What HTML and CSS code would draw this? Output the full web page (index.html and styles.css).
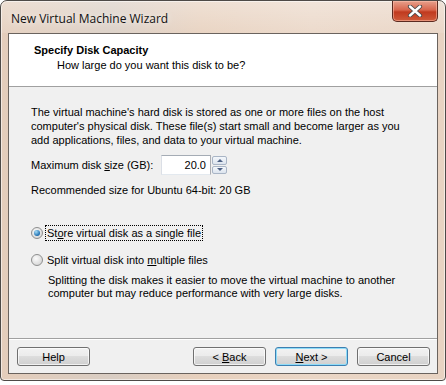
FILE: index.html
```html
<!DOCTYPE html>
<html lang="en">
<head>
    <meta charset="UTF-8">
    <title>New Virtual Machine Wizard</title>
    <link rel="stylesheet" href="styles.css">
</head>
<body>
    <div class="window">
        <div class="titlebar">
            <span class="title">New Virtual Machine Wizard</span>
            <button class="close">
                <svg width="16" height="12" viewBox="0 0 16 12">
                    <path d="M3 1.5 L13 10.5 M13 1.5 L3 10.5" stroke="#4a4a4a" stroke-width="4.2" stroke-linecap="round"/>
                    <path d="M3 1.5 L13 10.5 M13 1.5 L3 10.5" stroke="#fff" stroke-width="2.4" stroke-linecap="round"/>
                </svg>
            </button>
        </div>

        <div class="client">
            <div class="header">
                <div class="header-title">Specify Disk Capacity</div>
                <div class="header-sub">How large do you want this disk to be?</div>
            </div>

            <div class="content">
                <p class="intro">The virtual machine's hard disk is stored as one or more files on the host computer's physical disk. These file(s) start small and become larger as you add applications, files, and data to your virtual machine.</p>

                <div class="size-row">
                    <label class="size-label">Maximum disk <u>s</u>ize (GB):</label>
                    <div class="spinner">
                        <div class="spin-value">20.0</div>
                        <div class="spin-buttons">
                            <div class="spin-btn"><span class="arrow-up"></span></div>
                            <div class="spin-btn"><span class="arrow-down"></span></div>
                        </div>
                    </div>
                </div>

                <div class="recommended">Recommended size for Ubuntu 64-bit: 20 GB</div>

                <div class="options">
                    <div class="radio-row">
                        <span class="radio checked"></span>
                        <span class="radio-label focused">St<u>o</u>re virtual disk as a single file</span>
                    </div>
                    <div class="radio-row">
                        <span class="radio"></span>
                        <span class="radio-label">Split virtual disk into <u>m</u>ultiple files</span>
                    </div>
                    <p class="radio-note">Splitting the disk makes it easier to move the virtual machine to another computer but may reduce performance with very large disks.</p>
                </div>
            </div>

            <div class="footer">
                <button class="btn">Help</button>
                <div class="spacer"></div>
                <button class="btn">&lt; <u>B</u>ack</button>
                <button class="btn default"><u>N</u>ext &gt;</button>
                <button class="btn">Cancel</button>
            </div>
        </div>
    </div>
</body>
</html>
```

FILE: styles.css
```css
body {
    margin: 0;
    padding: 0;
    background: #fff;
    font-family: "Liberation Sans", Arial, sans-serif;
    font-size: 11px;
    color: #000;
}

.window {
    width: 444px;
    height: 379px;
    border: 1px solid #4e4a47;
    border-radius: 7px 7px 4px 4px;
    background: linear-gradient(90deg, #e4cdbb 0%, #d9cdc3 25%, #e7d0bd 45%, #ead6c6 70%, #e8d3c2 100%);
    display: flex;
    flex-direction: column;
    box-shadow: inset 0 0 0 1px rgba(255, 255, 255, 0.55);
}

.titlebar {
    height: 32px;
    display: flex;
    align-items: flex-start;
    position: relative;
    background: linear-gradient(180deg, rgba(255, 255, 255, 0.35), rgba(255, 255, 255, 0.1));
    border-radius: 6px 6px 0 0;
}

.title {
    font-family: "Open Sans", "Liberation Sans", sans-serif;
    font-size: 12px;
    color: #111;
    margin: 9px 0 0 10px;
    text-shadow: 0 0 6px rgba(255, 255, 255, 0.9);
}

.close {
    position: absolute;
    right: 7px;
    top: 0;
    width: 46px;
    height: 21px;
    border: 1px solid #5b2a20;
    border-top: none;
    border-radius: 0 0 5px 5px;
    background: linear-gradient(180deg, #e7a08c 0%, #d8654c 45%, #c03a1f 55%, #cf5a3a 100%);
    box-shadow: inset 0 0 0 1px rgba(255, 200, 180, 0.5);
    padding: 0;
    display: flex;
    align-items: center;
    justify-content: center;
}

.client {
    margin: 0 7px 6px 7px;
    border: 1px solid #6a635e;
    background: #f0f0f0;
    flex: 1;
    display: flex;
    flex-direction: column;
}

.header {
    height: 53px;
    background: #fff;
    border-bottom: 1px solid #a0a0a0;
    box-sizing: border-box;
}

.header-title {
    font-weight: bold;
    margin: 10px 0 0 25px;
}

.header-sub {
    margin: 3px 0 0 48px;
}

.content {
    flex: 1;
    padding: 0 0 0 22px;
    border-bottom: 1px solid #a0a0a0;
}

.intro {
    margin: 18px 0 0 0;
    line-height: 14px;
    width: 370px;
}

.size-row {
    display: flex;
    align-items: center;
    margin-top: 8px;
}

.size-label {
    width: 130px;
}

.spinner {
    display: flex;
    align-items: stretch;
    height: 20px;
}

.spin-value {
    width: 44px;
    border: 1px solid #abadb3;
    border-top-color: #a5acb5;
    border-left-color: #dbdfe6;
    border-bottom-color: #e3e9ef;
    background: #fff;
    text-align: right;
    padding-right: 4px;
    line-height: 18px;
}

.spin-buttons {
    display: flex;
    flex-direction: column;
    margin-left: 1px;
    gap: 1px;
    padding: 1px 0;
}

.spin-btn {
    width: 13px;
    flex: 1;
    border: 1px solid #a9b5c6;
    border-radius: 2px;
    background: linear-gradient(180deg, #f4f7fb, #dce4ee);
    display: flex;
    align-items: center;
    justify-content: center;
}

.arrow-up {
    border-left: 3px solid transparent;
    border-right: 3px solid transparent;
    border-bottom: 3px solid #4d6185;
}

.arrow-down {
    border-left: 3px solid transparent;
    border-right: 3px solid transparent;
    border-top: 3px solid #4d6185;
}

.recommended {
    margin-top: 9px;
}

.options {
    margin-top: 28px;
}

.radio-row {
    display: flex;
    align-items: center;
    height: 17px;
    margin-bottom: 10px;
}

.radio {
    width: 12px;
    height: 12px;
    border-radius: 50%;
    border: 1px solid #8e8f8f;
    background: radial-gradient(circle at 40% 35%, #fbfbfb, #d6d6d6 80%);
    box-sizing: border-box;
    margin: 0 2px 0 0;
    position: relative;
}

.radio.checked::after {
    content: "";
    position: absolute;
    left: 2px;
    top: 2px;
    width: 6px;
    height: 6px;
    border-radius: 50%;
    background: radial-gradient(circle at 35% 30%, #a4dcf8, #1e6fb0 70%, #0e4a86);
}

.radio-label {
    padding: 1px 1px;
    border: 1px solid transparent;
}

.radio-label.focused {
    border: 1px dotted #000;
}

.radio-note {
    margin: -4px 0 0 17px;
    line-height: 13px;
    width: 360px;
}

.footer {
    height: 34px;
    display: flex;
    align-items: center;
    padding: 0 7px 0 8px;
    gap: 9px;
    box-sizing: border-box;
    border-top: 1px solid #fff;
}

.spacer {
    flex: 1;
}

.btn {
    width: 73px;
    height: 19px;
    font-family: "Liberation Sans", Arial, sans-serif;
    font-size: 11px;
    color: #000;
    border: 1px solid #707070;
    border-radius: 3px;
    background: linear-gradient(180deg, #f2f2f2 0%, #ebebeb 49%, #dddddd 50%, #cfcfcf 100%);
    box-shadow: inset 0 0 0 1px rgba(255, 255, 255, 0.7);
    padding: 0;
}

.btn.default {
    border-color: #3c7fb1;
    box-shadow: inset 0 0 0 1px #8fdcf8;
}
```
